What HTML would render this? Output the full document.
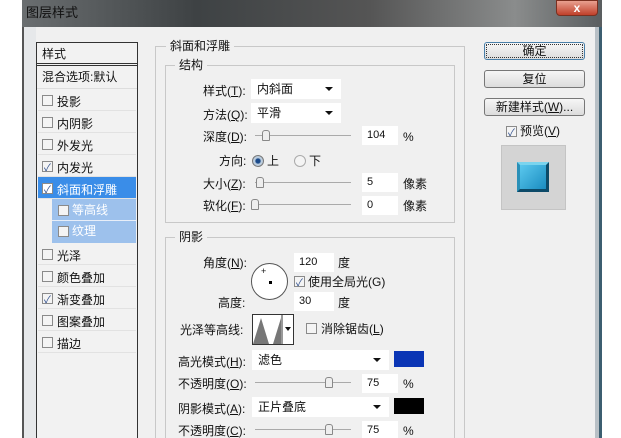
<!DOCTYPE html>
<html style="overflow:hidden;width:621px;height:438px"><head><meta charset="utf-8"><style>
*{margin:0;padding:0;box-sizing:border-box}
body{width:621px;height:438px;overflow:hidden;background:#fff;position:relative;font-family:"Liberation Sans","Noto Sans CJK SC",sans-serif;font-size:12px;color:#111}
.a{position:absolute}
.t{position:absolute;white-space:nowrap;line-height:14px}
.cb{position:absolute;width:11px;height:11px;border:1px solid #8a8a8a;background:#f4f4f4}
.cb.k::after{content:"✓";position:absolute;left:1px;top:-3px;font-size:10px;color:#2a4a8a}
.in{position:absolute;background:#fff;height:19px;line-height:19px;padding-left:5px;font-size:11px}
.dd{position:absolute;background:#fff;height:20px;line-height:20px;padding-left:6px}
.dd::after{content:"";position:absolute;right:8px;top:8px;border:4px solid transparent;border-top:4px solid #111}
.sl{position:absolute;height:1px;background:#aaa}
.th{position:absolute;width:8px;height:11px;border:1px solid #888;border-radius:3px 3px 1px 1px;background:#eee}
.btn{position:absolute;left:484px;width:101px;height:18px;border:1px solid #777;border-radius:3px;background:linear-gradient(#f6f6f6,#dcdcdc);text-align:center;line-height:16px}
.gb{position:absolute;border:1px solid #c8c8c8}
.lg{position:absolute;background:#f0f0f0;padding:0 4px;line-height:14px}
.row{position:absolute;left:38px;width:98px;height:22px;border-bottom:1px solid #e2e2e2}
.row .cb{left:4px;top:6px}
.row span{position:absolute;left:19px;top:4px}
</style></head><body>
<div class="a" style="left:22px;top:0;width:580px;height:27px;background:linear-gradient(90deg,#6a6e70,#3e4244 30%,#555 60%,#8a8c8c 85%,#5a5e60)"></div>
<div class="t" style="left:26px;top:6px;color:#111;font-size:13px">图层样式</div>
<div class="a" style="left:556px;top:0;width:42px;height:16px;background:linear-gradient(#e8a090,#c0402a);border:1px solid #7a3020;border-radius:0 0 4px 4px;color:#fff;text-align:center;font-weight:bold;line-height:14px">x</div>
<div class="a" style="left:22px;top:27px;width:580px;height:411px;background:#f0f0f0;border-left:2px solid #555;border-right:3px solid #3c5e70"></div>
<div class="a" style="left:24px;top:27px;width:12px;height:411px;background:#e6e8ea"></div>
<div class="a" style="left:595px;top:27px;width:4px;height:411px;background:#b8c0c6"></div>
<!-- left list -->
<div class="a" style="left:36px;top:42px;width:102px;height:396px;border:1px solid #333;border-bottom:none;background:#f2f2f2"></div>
<div class="t" style="left:42px;top:47px">样式</div>
<div class="a" style="left:37px;top:63px;width:100px;height:3px;border-top:1px solid #333;border-bottom:1px solid #333"></div>
<div class="t" style="left:42px;top:70px">混合选项:默认</div>
<div class="a" style="left:37px;top:88px;width:100px;height:1px;background:#ddd"></div>
<div class="row" style="top:89px"><div class="cb"></div><span>投影</span></div>
<div class="row" style="top:111px"><div class="cb"></div><span>内阴影</span></div>
<div class="row" style="top:133px"><div class="cb"></div><span>外发光</span></div>
<div class="row" style="top:155px"><div class="cb k"></div><span>内发光</span></div>
<div class="row" style="top:177px;background:#3a8de8;color:#fff"><div class="cb k" style="background:#fff"></div><span>斜面和浮雕</span></div>
<div class="a" style="left:52px;top:199px;width:84px;height:44px;background:#9dc1ec"></div>
<div class="cb" style="left:58px;top:205px"></div><div class="t" style="left:72px;top:203px;color:#fff">等高线</div>
<div class="a" style="left:52px;top:220px;width:84px;height:1px;background:#e8eef8"></div>
<div class="cb" style="left:58px;top:226px"></div><div class="t" style="left:72px;top:224px;color:#fff">纹理</div>
<div class="row" style="top:243px"><div class="cb"></div><span>光泽</span></div>
<div class="row" style="top:265px"><div class="cb"></div><span>颜色叠加</span></div>
<div class="row" style="top:287px"><div class="cb k"></div><span>渐变叠加</span></div>
<div class="row" style="top:309px"><div class="cb"></div><span>图案叠加</span></div>
<div class="row" style="top:331px"><div class="cb"></div><span>描边</span></div>
<!-- groups -->
<div class="gb" style="left:155px;top:46px;width:310px;height:400px"></div>
<div class="lg" style="left:166px;top:39px">斜面和浮雕</div>
<div class="gb" style="left:165px;top:65px;width:290px;height:158px"></div>
<div class="lg" style="left:175px;top:58px">结构</div>
<div class="t" style="left:203px;top:84px">样式(<u>T</u>):</div>
<div class="dd" style="left:251px;top:79px;width:90px">内斜面</div>
<div class="t" style="left:203px;top:108px">方法(<u>Q</u>):</div>
<div class="dd" style="left:251px;top:103px;width:90px">平滑</div>
<div class="t" style="left:203px;top:130px">深度(<u>D</u>):</div>
<div class="sl" style="left:255px;top:135px;width:96px"></div><div class="th" style="left:262px;top:130px"></div>
<div class="in" style="left:362px;top:126px;width:36px">104</div><div class="t" style="left:403px;top:130px">%</div>
<div class="t" style="left:219px;top:154px">方向:</div>
<div class="a" style="left:252px;top:155px;width:12px;height:12px;border-radius:50%;border:1px solid #777;background:radial-gradient(#1a4a8a 30%,#bcd 45%)"></div>
<div class="t" style="left:267px;top:154px">上</div>
<div class="a" style="left:294px;top:155px;width:12px;height:12px;border-radius:50%;border:1px solid #aaa;background:#f4f4f4"></div>
<div class="t" style="left:309px;top:154px">下</div>
<div class="t" style="left:203px;top:177px">大小(<u>Z</u>):</div>
<div class="sl" style="left:255px;top:182px;width:96px"></div><div class="th" style="left:256px;top:177px"></div>
<div class="in" style="left:362px;top:173px;width:36px">5</div><div class="t" style="left:403px;top:177px">像素</div>
<div class="t" style="left:203px;top:199px">软化(<u>F</u>):</div>
<div class="sl" style="left:255px;top:204px;width:96px"></div><div class="th" style="left:251px;top:199px"></div>
<div class="in" style="left:362px;top:196px;width:36px">0</div><div class="t" style="left:403px;top:199px">像素</div>
<div class="gb" style="left:165px;top:237px;width:290px;height:220px"></div>
<div class="lg" style="left:175px;top:230px">阴影</div>
<div class="t" style="left:203px;top:256px">角度(<u>N</u>):</div>
<div class="a" style="left:251px;top:263px;width:37px;height:37px;border-radius:50%;border:1px solid #555;background:#fff"></div>
<div class="a" style="left:269px;top:281px;width:3px;height:3px;background:#000"></div>
<div class="t" style="left:261px;top:264px;font-size:9px">+</div>
<div class="in" style="left:294px;top:253px;width:40px">120</div><div class="t" style="left:338px;top:256px">度</div>
<div class="cb k" style="left:294px;top:276px"></div><div class="t" style="left:308px;top:275px">使用全局光(G)</div>
<div class="t" style="left:218px;top:296px">高度:</div>
<div class="in" style="left:294px;top:292px;width:40px">30</div><div class="t" style="left:338px;top:296px">度</div>
<div class="t" style="left:180px;top:323px">光泽等高线:</div>
<div class="a" style="left:252px;top:314px;width:42px;height:31px;border:1px solid #333;background:#fff">
<svg width="40" height="29" style="position:absolute;left:0;top:0"><path d="M0 29 L8 3 L16 29 L20 29 L28 3 L28 29Z" fill="#777"/><line x1="29" y1="0" x2="29" y2="29" stroke="#333"/><path d="M32 12 L38 12 L35 16Z" fill="#111"/></svg></div>
<div class="cb" style="left:306px;top:323px"></div><div class="t" style="left:321px;top:322px">消除锯齿(<u>L</u>)</div>
<div class="t" style="left:178px;top:355px">高光模式(<u>H</u>):</div>
<div class="dd" style="left:252px;top:350px;width:137px">滤色</div>
<div class="a" style="left:394px;top:351px;width:30px;height:16px;background:#0a35b5"></div>
<div class="t" style="left:178px;top:377px">不透明度(<u>O</u>):</div>
<div class="sl" style="left:255px;top:382px;width:96px"></div><div class="th" style="left:325px;top:377px"></div>
<div class="in" style="left:362px;top:374px;width:36px">75</div><div class="t" style="left:403px;top:377px">%</div>
<div class="t" style="left:178px;top:402px">阴影模式(<u>A</u>):</div>
<div class="dd" style="left:252px;top:397px;width:137px">正片叠底</div>
<div class="a" style="left:394px;top:398px;width:30px;height:16px;background:#000"></div>
<div class="t" style="left:178px;top:424px">不透明度(<u>C</u>):</div>
<div class="sl" style="left:255px;top:429px;width:96px"></div><div class="th" style="left:325px;top:424px"></div>
<div class="in" style="left:362px;top:421px;width:36px">75</div><div class="t" style="left:403px;top:424px">%</div>
<!-- buttons -->
<div class="btn" style="top:42px;border-color:#4a7fa8;outline:1px dotted #333;outline-offset:-3px">确定</div>
<div class="btn" style="top:70px">复位</div>
<div class="btn" style="top:98px">新建样式(<u>W</u>)...</div>
<div class="cb k" style="left:506px;top:126px"></div><div class="t" style="left:520px;top:124px">预览(<u>V</u>)</div>
<div class="a" style="left:501px;top:145px;width:65px;height:65px;background:#d4d4d4;border:1px solid #c4c4c4"></div>
<div class="a" style="left:517px;top:162px;width:32px;height:30px;background:linear-gradient(135deg,#5ac8ee,#1a8cc0);border:3px solid #0c4a68;border-top-color:#7ad4ee;border-left-color:#2a90b8"></div>
</body></html>
